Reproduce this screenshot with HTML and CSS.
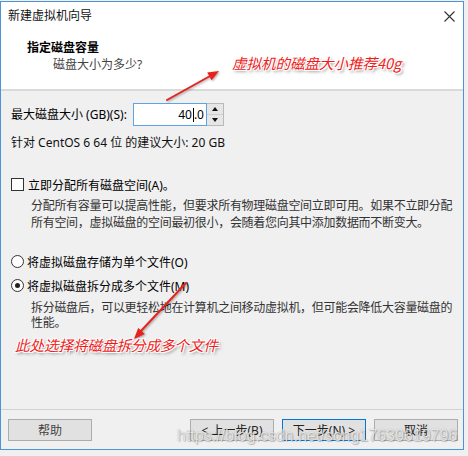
FILE: index.html
```html
<!DOCTYPE html>
<html lang="zh-CN">
<head>
<meta charset="utf-8">
<title>新建虚拟机向导</title>
<link rel="stylesheet" href="styles.css">
</head>
<body>
<div class="window">
  <div class="top">
    <div class="titlebar">
      <span class="title">新建虚拟机向导</span>
      <svg class="close" width="11" height="11" viewBox="0 0 11 11"><path d="M0.5 0.5L10.5 10.5M10.5 0.5L0.5 10.5" stroke="#333" stroke-width="1.1" fill="none"/></svg>
    </div>
    <div class="header">
      <div class="h-title">指定磁盘容量</div>
      <div class="h-sub">磁盘大小为多少?</div>
    </div>
  </div>
  <div class="content">
    <div class="size-row">
      <span class="size-label">最大磁盘大小 (GB)(S):</span>
      <div class="spin-input"><span>40</span><span class="caret"></span><span>.0</span></div>
      <div class="spin-btns">
        <div class="spin-btn"><span class="tri-up"></span></div>
        <div class="spin-btn spin-bottom"><span class="tri-down"></span></div>
      </div>
    </div>
    <div class="hint">针对 CentOS 6 64 位 的建议大小: 20 GB</div>
    <div class="check-row">
      <span class="checkbox"></span>
      <span class="check-label">立即分配所有磁盘空间(A)。</span>
    </div>
    <div class="desc desc-alloc">分配所有容量可以提高性能，但要求所有物理磁盘空间立即可用。如果不立即分配<br>所有空间，虚拟磁盘的空间最初很小，会随着您向其中添加数据而不断变大。</div>
    <div class="radio-row radio-first">
      <span class="radio"></span>
      <span class="radio-label">将虚拟磁盘存储为单个文件(O)</span>
    </div>
    <div class="radio-row radio-second">
      <span class="radio checked"></span>
      <span class="radio-label">将虚拟磁盘拆分成多个文件(M)</span>
    </div>
    <div class="desc desc-split">拆分磁盘后，可以更轻松地在计算机之间移动虚拟机，但可能会降低大容量磁盘的<br>性能。</div>
  </div>
  <div class="footer">
    <button class="btn help">帮助</button>
    <button class="btn">&lt; 上一步(B)</button>
    <button class="btn primary">下一步(N) &gt;</button>
    <button class="btn">取消</button>
  </div>
</div>

<svg class="arrows" width="468" height="456" viewBox="0 0 468 456">
  <g class="arrow">
    <line x1="167" y1="100" x2="211" y2="75.5" stroke="#e8211d" stroke-width="2" stroke-linecap="round"/>
    <polygon points="219,71 211.6,80.3 207.2,72.5" fill="#e8211d"/>
  </g>
  <g class="arrow">
    <line x1="186" y1="283" x2="140" y2="332" stroke="#e8211d" stroke-width="2" stroke-linecap="round"/>
    <polygon points="134,339 144.8,334 138.2,327.9" fill="#e8211d"/>
  </g>
</svg>
<div class="note note-size">虚拟机的磁盘大小推荐40g</div>
<div class="note note-split">此处选择将磁盘拆分成多个文件</div>
<div class="watermark">https://blog.csdn.net/song17639619796</div>
</body>
</html>
```

FILE: styles.css
```css
* { box-sizing: border-box; }
html, body { margin: 0; padding: 0; }
body {
  width: 468px;
  height: 456px;
  position: relative;
  overflow: hidden;
  background: #f0f0f0;
  font-family: "Noto Sans", "Noto Sans CJK SC", sans-serif;
  font-size: 12px;
  color: #000;
}
.window {
  margin-top: 1px;
  width: 464px;
  height: 449px;
  border: 1px solid #4d93d9;
  display: flex;
  flex-direction: column;
  background: #f0f0f0;
}
.top {
  background: #fff;
  border-bottom: 2px solid #dadada;
}
.titlebar {
  height: 28px;
  display: flex;
  align-items: center;
  justify-content: space-between;
  padding: 0 8px 0 7px;
}
.title {
  line-height: 28px;
  color: #111;
}
.close { display: block; }
.header {
  height: 59px;
  padding: 9px 0 0 26px;
}
.h-title {
  font-weight: bold;
  line-height: 17px;
}
.h-sub {
  line-height: 17px;
  padding-left: 26px;
  color: #444;
}
.content {
  flex: 1;
  padding: 12px 0 0 10px;
}
.size-row {
  display: flex;
  align-items: center;
  height: 23px;
}
.size-label {
  width: 122px;
  line-height: 17px;
}
.spin-input {
  width: 74px;
  height: 23px;
  border: 1px solid #5ea3e6;
  background: #fff;
  display: flex;
  justify-content: flex-end;
  align-items: center;
  padding-right: 2px;
  font-size: 12px;
}
.caret {
  width: 1px;
  height: 14px;
  background: #000;
  margin: 0 0 0 1px;
}
.spin-btns {
  width: 17px;
  height: 23px;
  border: 1px solid #b9b9b9;
  border-left: none;
  display: flex;
  flex-direction: column;
  background: #f0f0f0;
}
.spin-btn {
  flex: 1;
  display: flex;
  align-items: center;
  justify-content: center;
  background: #e6e6e6;
}
.spin-bottom { border-top: 1px solid #cfcfcf; }
.tri-up {
  width: 0; height: 0;
  border-left: 3.5px solid transparent;
  border-right: 3.5px solid transparent;
  border-bottom: 4px solid #111;
}
.tri-down {
  width: 0; height: 0;
  border-left: 3.5px solid transparent;
  border-right: 3.5px solid transparent;
  border-top: 4px solid #111;
}
.hint {
  margin-top: 8px;
  line-height: 17px;
  color: #111;
}
.check-row, .radio-row {
  display: flex;
  align-items: center;
  height: 17px;
}
.check-row { margin-top: 25px; }
.checkbox {
  width: 13px;
  height: 13px;
  border: 1px solid #333;
  background: #fff;
  margin-right: 4px;
}
.desc {
  padding-left: 20px;
  color: #333;
  white-space: nowrap;
  letter-spacing: -0.3px;
}
.desc-alloc { margin-top: 4px; line-height: 17px; }
.radio-first { margin-top: 22px; }
.radio-second { margin-top: 7px; }
.radio {
  width: 13px;
  height: 13px;
  border: 1px solid #333;
  border-radius: 50%;
  background: #fff;
  margin-right: 3px;
  display: flex;
  align-items: center;
  justify-content: center;
}
.radio.checked::after {
  content: "";
  width: 5px;
  height: 5px;
  border-radius: 50%;
  background: #222;
}
.desc-split { margin-top: 6px; line-height: 15px; }
.footer {
  height: 40px;
  border-top: 1px solid #d2d2d2;
  display: flex;
  align-items: flex-start;
  padding: 9px 5px 0 7px;
}
.btn {
  width: 84px;
  height: 22px;
  padding: 0;
  border: 1px solid #adadad;
  background: #e1e1e1;
  font-family: "Noto Sans", "Noto Sans CJK SC", sans-serif;
  font-size: 12px;
  color: #222;
}
.btn + .btn { margin-left: 8px; }
.help { margin-right: auto; color: #444; }
.btn.primary { border-color: #0078d7; }
.arrows {
  position: absolute;
  left: 0;
  top: 0;
  pointer-events: none;
}
.arrow { filter: drop-shadow(1px 1px 1px rgba(0,0,0,0.35)); }
.note {
  position: absolute;
  font-family: "Noto Sans CJK SC", sans-serif;
  font-size: 14.5px;
  line-height: 18px;
  font-style: italic;
  color: #f01c1c;
  white-space: nowrap;
  text-shadow: -1px -1px 0 #fff, 1px -1px 0 #fff, -1px 1px 0 #fff, 1px 1px 0 #fff, 2px 2px 3px rgba(0,0,0,0.5);
}
.note-size { left: 232px; top: 54px; }
.note-split { left: 15px; top: 336px; }
.watermark {
  position: absolute;
  left: 177px;
  top: 427px;
  font-family: "Liberation Sans", Arial, sans-serif;
  font-size: 16px;
  line-height: 18px;
  white-space: nowrap;
  color: rgba(255,255,255,0.75);
  text-shadow: 0 0 1px rgba(0,0,0,0.35), 1px 1px 1px rgba(0,0,0,0.2);
}
```
